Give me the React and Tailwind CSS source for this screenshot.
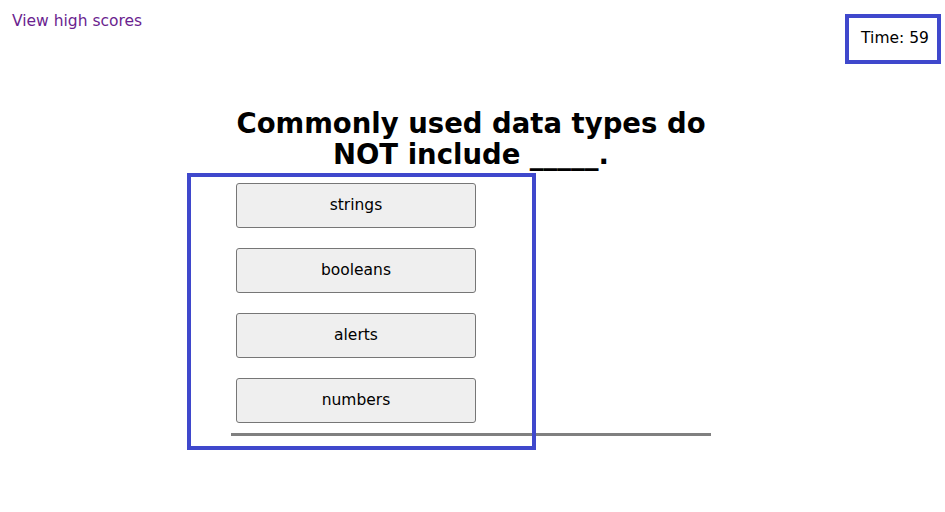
import React from "react";

export default function App() {
  const answers = ["strings", "booleans", "alerts", "numbers"];
  return (
    <div className="relative w-[945px] h-[512px] bg-white text-black" style={{ fontFamily: '"DejaVu Sans", Verdana, sans-serif' }}>
      <div className="flex items-start justify-between">
        <a href="#" className="ml-[12px] mt-[11px] text-[15.5px] leading-[20px] text-[#6b1f8f]">View high scores</a>
        <div className="mt-[14px] mr-[4px] border-[4px] border-[#3f48cc] w-[96px] h-[50px] flex items-center justify-center text-[15.5px] pl-[4px]">
          Time: 59
        </div>
      </div>
      <div className="w-[480px] ml-[231px] mt-[44px]">
        <h1 className="text-[27.5px] leading-[31px] font-bold text-center">
          Commonly used data types do NOT include _____.
        </h1>
        <div className="flex flex-col gap-[20px] mt-[13px] pl-[5px]">
          {answers.map((a) => (
            <button key={a} className="w-[240px] h-[45px] bg-[#efefef] border border-[#767676] rounded-[3px] text-[15.5px]">
              {a}
            </button>
          ))}
        </div>
        <div className="mt-[10px] h-[3px] bg-[#808080]" />
      </div>
      <div className="absolute left-[187px] top-[173px] w-[349px] h-[277px] border-[4px] border-[#3f48cc]" />
    </div>
  );
}
